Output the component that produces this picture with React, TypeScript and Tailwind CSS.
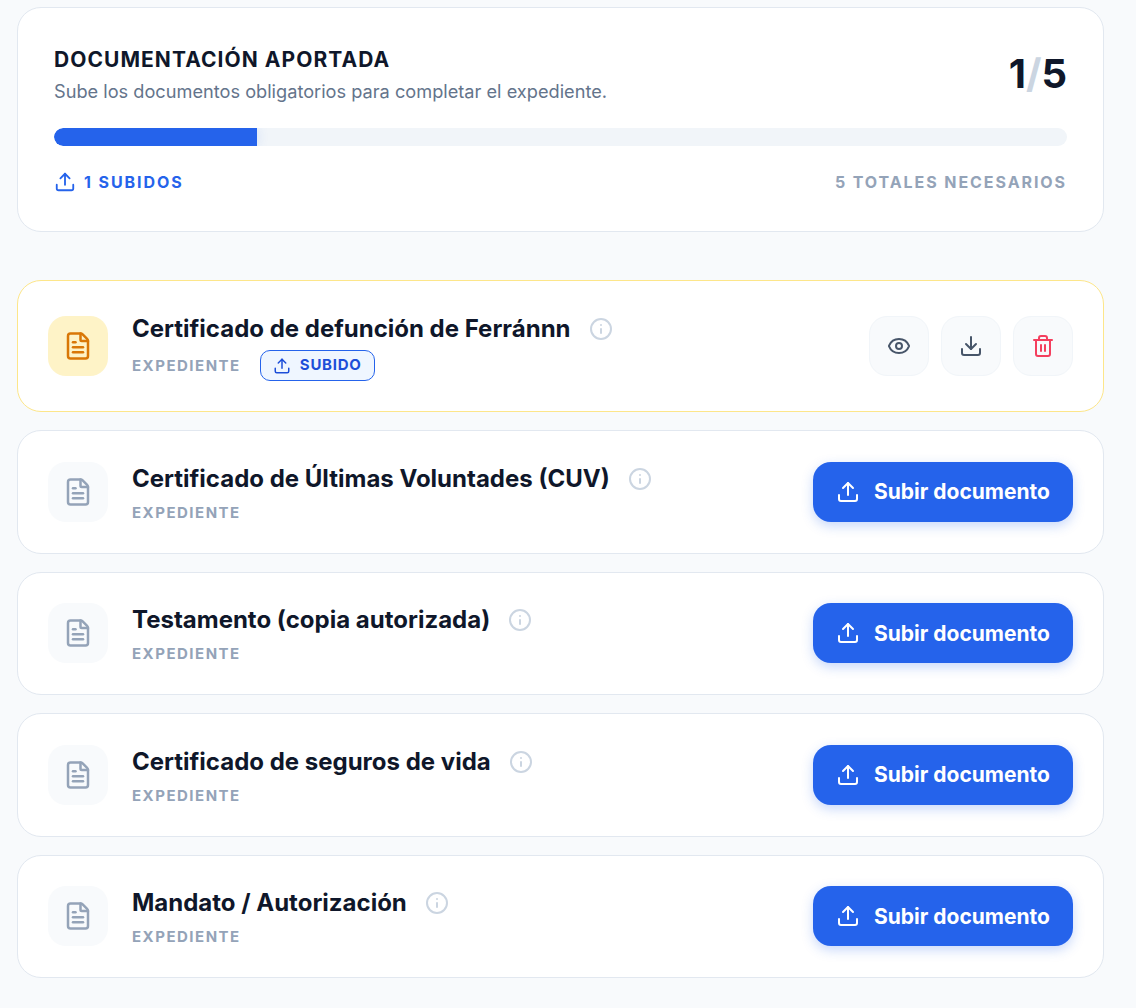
import { Download, Eye, FileText, Info, Trash2, Upload } from 'lucide-react';

const pendingDocs = [
  'Certificado de Últimas Voluntades (CUV)',
  'Testamento (copia autorizada)',
  'Certificado de seguros de vida',
  'Mandato / Autorización',
];

function DocTitle({ name }: { name: string }) {
  return (
    <div className="flex items-center gap-[18px]">
      <h3 className="text-[24px] leading-[32px] font-bold text-[#0f172a]">{name}</h3>
      <Info className="w-6 h-6 text-[#cbd5e1]" strokeWidth={2} />
    </div>
  );
}

function ExpedienteLabel() {
  return <span className="text-[15px] leading-[20px] font-bold tracking-[0.1em] text-[#94a3b8]">EXPEDIENTE</span>;
}

function PendingCard({ name }: { name: string }) {
  return (
    <div className="bg-white border border-[#e2e8f0] rounded-[24px] px-[30px] py-[30px] flex items-center justify-between h-[123.5px]">
      <div className="flex items-center gap-6">
        <div className="w-[60px] h-[60px] rounded-[18px] bg-[#f8fafc] flex items-center justify-center">
          <FileText className="w-[30px] h-[30px] text-[#94a3b8]" />
        </div>
        <div className="flex flex-col pt-[3px]">
          <DocTitle name={name} />
          <div className="mt-[5px]">
            <ExpedienteLabel />
          </div>
        </div>
      </div>
      <button className="w-[260px] h-[60px] rounded-[18px] bg-[#2563eb] text-white text-[21px] font-bold flex items-center justify-center gap-[14px] shadow-[0_4px_12px_rgba(37,99,235,0.25)]">
        <Upload className="w-6 h-6" />
        Subir documento
      </button>
    </div>
  );
}

export default function App() {
  return (
    <div className="min-h-[1008px] bg-[#f8fafc] pl-[17px] pr-8 pt-[7px] font-['Inter',sans-serif]">
      {/* Progress summary */}
      <section className="bg-white border border-[#e2e8f0] rounded-[24px] px-9 pt-[38px] h-[225px]">
        <div className="flex items-start justify-between">
          <div>
            <h2 className="text-[21px] leading-[28px] font-bold text-[#0f172a] tracking-[0.05em]">DOCUMENTACIÓN APORTADA</h2>
            <p className="text-[18.2px] leading-[24px] text-[#64748b] mt-[5px]">Sube los documentos obligatorios para completar el expediente.</p>
          </div>
          <div className="text-[40px] leading-[40px] font-bold text-[#0f172a] mt-[8px]">
            1<span className="text-[#cbd5e1]">/</span>5
          </div>
        </div>
        <div className="mt-[25px] h-[18px] rounded-full bg-[#f1f5f9] overflow-hidden">
          <div className="h-full w-[20%] bg-[#2563eb] rounded-l-full shadow-[0_0_12px_rgba(37,99,235,0.15)]" />
        </div>
        <div className="mt-[24px] flex items-center justify-between">
          <div className="flex items-center gap-2 text-[#2563eb]">
            <Upload className="w-[22px] h-[22px]" />
            <span className="text-[16px] leading-[24px] font-bold tracking-[0.12em]">1 SUBIDOS</span>
          </div>
          <span className="text-[16px] leading-[24px] font-bold tracking-[0.12em] text-[#94a3b8]">5 TOTALES NECESARIOS</span>
        </div>
      </section>

      {/* Documents */}
      <div className="mt-[48px] flex flex-col gap-[18px]">
        <div className="bg-white border border-[#fde68a] rounded-[24px] px-[30px] py-[30px] flex items-center justify-between h-[132px]">
          <div className="flex items-center gap-6">
            <div className="w-[60px] h-[60px] rounded-[18px] bg-[#fef3c7] flex items-center justify-center">
              <FileText className="w-[30px] h-[30px] text-[#d97706]" />
            </div>
            <div className="flex flex-col pt-[2px]">
              <DocTitle name="Certificado de defunción de Ferránnn" />
              <div className="flex items-center gap-[19px] mt-[5px]">
                <ExpedienteLabel />
                <span className="h-[31px] w-[115px] rounded-[10px] border border-[#2563eb] bg-[#eff6ff] text-[#1d4ed8] flex items-center justify-center gap-[9px] text-[15px] font-bold tracking-[0.05em]">
                  <Upload className="w-[18px] h-[18px]" />
                  SUBIDO
                </span>
              </div>
            </div>
          </div>
          <div className="flex items-center gap-3">
            <button className="w-[60px] h-[60px] rounded-[18px] bg-[#f8fafc] border border-[#f1f5f9] flex items-center justify-center text-[#475569]">
              <Eye className="w-6 h-6" />
            </button>
            <button className="w-[60px] h-[60px] rounded-[18px] bg-[#f8fafc] border border-[#f1f5f9] flex items-center justify-center text-[#475569]">
              <Download className="w-6 h-6" />
            </button>
            <button className="w-[60px] h-[60px] rounded-[18px] bg-[#f8fafc] border border-[#f1f5f9] flex items-center justify-center text-[#f43f5e]">
              <Trash2 className="w-6 h-6" />
            </button>
          </div>
        </div>
        {pendingDocs.map((name) => (
          <PendingCard key={name} name={name} />
        ))}
      </div>
    </div>
  );
}
